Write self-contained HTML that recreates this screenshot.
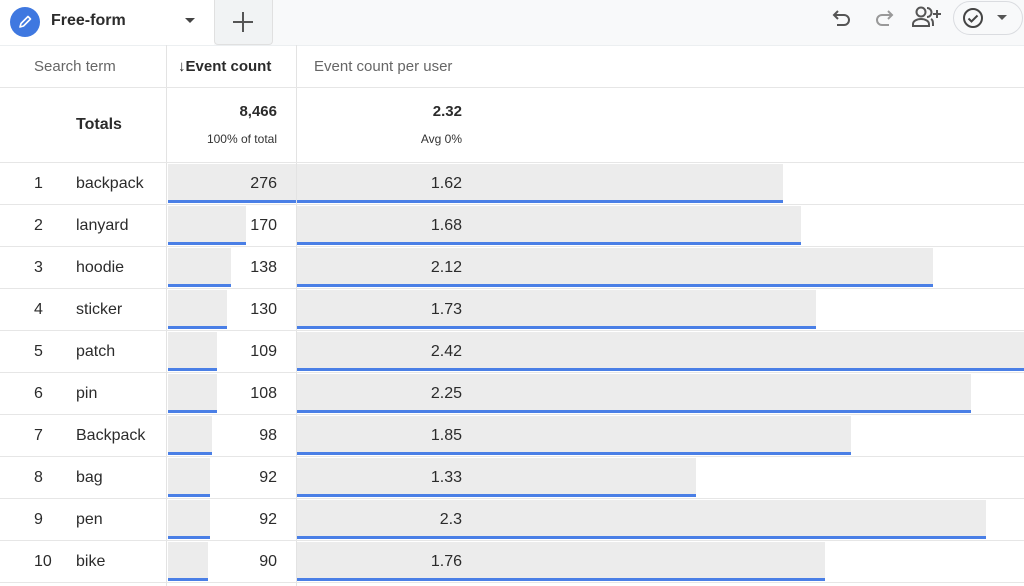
<!DOCTYPE html><html><head><style>
body{margin:0;width:1024px;height:586px;overflow:hidden;background:#fff;font-family:"Liberation Sans",Arial,sans-serif;color:#2b2b2b;position:relative}
.a{position:absolute}
.top{left:0;top:0;width:1024px;height:45px;background:#f8f9fa;border-bottom:1px solid #eceff1}
.tab{left:0;top:0;width:214px;height:45px;background:#fff}
.plus{left:214px;top:0;width:57px;height:44px;background:#f1f3f4;border:1px solid #e0e0e0;border-top:none;border-radius:0 0 4px 4px}
.hl{height:1px;background:#e6e6e6;left:0;width:1024px}
.vl{width:1px;background:#e3e3e3}
.g{background:#ececec}
.b{background:#4a7fe6;height:3px}
.t{font-size:16px;line-height:20px}
</style></head><body>
<div class="a top"></div>
<div class="a tab"></div>
<div class="a" style="left:10px;top:7px;width:30px;height:30px;border-radius:50%;background:#3f78e0"></div>
<svg class="a" style="left:17px;top:14px" width="16" height="16" viewBox="0 0 16 16"><path d="M3 13l1-3.5 7-7 2.5 2.5-7 7z" fill="none" stroke="#fff" stroke-width="1.6" stroke-linejoin="round"/></svg>
<div class="a t" style="left:51px;top:11px;font-weight:bold;font-size:16px">Free-form</div>
<div class="a" style="left:185px;top:18px;width:0;height:0;border-left:5px solid transparent;border-right:5px solid transparent;border-top:5px solid #444"></div>
<div class="a plus"></div>
<div class="a" style="left:233px;top:21px;width:20px;height:2px;background:#555"></div>
<div class="a" style="left:242px;top:12px;width:2px;height:20px;background:#555"></div>
<svg class="a" style="left:830px;top:5px" width="26" height="24" viewBox="0 0 26 24"><path d="M8 6l-4 4 4 4M4 10h10a5 5 0 0 1 0 10H7" fill="none" stroke="#555" stroke-width="2"/></svg>
<svg class="a" style="left:870px;top:5px" width="26" height="24" viewBox="0 0 26 24"><path d="M18 6l4 4-4 4M22 10H12a5 5 0 0 0 0 10h7" fill="none" stroke="#999" stroke-width="2"/></svg>
<svg class="a" style="left:910px;top:4px" width="34" height="26" viewBox="0 0 34 26"><circle cx="11" cy="8" r="4.5" fill="none" stroke="#555" stroke-width="2"/><path d="M3 22v-2c0-3 4-5 8-5s8 2 8 5v2z" fill="none" stroke="#555" stroke-width="2"/><path d="M17 4a4.5 4.5 0 0 1 0 9M21 15c2 1 2 3 2 7" fill="none" stroke="#555" stroke-width="2"/><path d="M27 6v8M23 10h8" stroke="#555" stroke-width="2"/></svg>
<div class="a" style="left:953px;top:1px;width:68px;height:32px;border:1px solid #dadce0;border-radius:17px;background:#f8f9fa"></div>
<svg class="a" style="left:961px;top:6px" width="24" height="24" viewBox="0 0 24 24"><circle cx="12" cy="12" r="9" fill="none" stroke="#444" stroke-width="2"/><path d="M7.5 12.5l3 3 6-6" fill="none" stroke="#444" stroke-width="2"/></svg>
<div class="a" style="left:997px;top:15px;width:0;height:0;border-left:5px solid transparent;border-right:5px solid transparent;border-top:5px solid #555"></div>

<div class="a vl" style="left:166px;top:45px;height:541px"></div>
<div class="a vl" style="left:296px;top:45px;height:541px"></div>
<div class="a t" style="left:34px;top:57px;color:#666;font-size:15px">Search term</div>
<div class="a t" style="left:178px;top:57px;font-weight:bold;font-size:15px">↓Event count</div>
<div class="a t" style="left:314px;top:57px;color:#666;font-size:15px">Event count per user</div>
<div class="a hl" style="top:87px"></div>
<div class="a t" style="left:76px;top:115px;font-weight:bold">Totals</div>
<div class="a t" style="right:747px;top:102px;font-weight:bold;font-size:15px">8,466</div>
<div class="a" style="right:747px;top:132px;font-size:12px;color:#333">100% of total</div>
<div class="a t" style="right:562px;top:102px;font-weight:bold;font-size:15px">2.32</div>
<div class="a" style="right:562px;top:132px;font-size:12px;color:#333">Avg 0%</div>
<div class="a hl" style="top:162px"></div>

<div class="a" style="left:0;top:163px;width:1024px">
<div style="position:relative;height:42px"><div class="a g" style="left:168px;top:1px;width:128px;height:38px"></div><div class="a b" style="left:168px;top:37px;width:128px"></div><div class="a g" style="left:297px;top:1px;width:486px;height:38px"></div><div class="a b" style="left:297px;top:37px;width:486px"></div><div class="a t" style="left:34px;top:11px">1</div><div class="a t" style="left:76px;top:11px">backpack</div><div class="a t" style="right:747px;top:11px">276</div><div class="a t" style="right:562px;top:11px">1.62</div><div class="a hl" style="top:41px"></div></div>
<div style="position:relative;height:42px"><div class="a g" style="left:168px;top:1px;width:78px;height:38px"></div><div class="a b" style="left:168px;top:37px;width:78px"></div><div class="a g" style="left:297px;top:1px;width:504px;height:38px"></div><div class="a b" style="left:297px;top:37px;width:504px"></div><div class="a t" style="left:34px;top:11px">2</div><div class="a t" style="left:76px;top:11px">lanyard</div><div class="a t" style="right:747px;top:11px">170</div><div class="a t" style="right:562px;top:11px">1.68</div><div class="a hl" style="top:41px"></div></div>
<div style="position:relative;height:42px"><div class="a g" style="left:168px;top:1px;width:63px;height:38px"></div><div class="a b" style="left:168px;top:37px;width:63px"></div><div class="a g" style="left:297px;top:1px;width:636px;height:38px"></div><div class="a b" style="left:297px;top:37px;width:636px"></div><div class="a t" style="left:34px;top:11px">3</div><div class="a t" style="left:76px;top:11px">hoodie</div><div class="a t" style="right:747px;top:11px">138</div><div class="a t" style="right:562px;top:11px">2.12</div><div class="a hl" style="top:41px"></div></div>
<div style="position:relative;height:42px"><div class="a g" style="left:168px;top:1px;width:59px;height:38px"></div><div class="a b" style="left:168px;top:37px;width:59px"></div><div class="a g" style="left:297px;top:1px;width:519px;height:38px"></div><div class="a b" style="left:297px;top:37px;width:519px"></div><div class="a t" style="left:34px;top:11px">4</div><div class="a t" style="left:76px;top:11px">sticker</div><div class="a t" style="right:747px;top:11px">130</div><div class="a t" style="right:562px;top:11px">1.73</div><div class="a hl" style="top:41px"></div></div>
<div style="position:relative;height:42px"><div class="a g" style="left:168px;top:1px;width:49px;height:38px"></div><div class="a b" style="left:168px;top:37px;width:49px"></div><div class="a g" style="left:297px;top:1px;width:727px;height:38px"></div><div class="a b" style="left:297px;top:37px;width:727px"></div><div class="a t" style="left:34px;top:11px">5</div><div class="a t" style="left:76px;top:11px">patch</div><div class="a t" style="right:747px;top:11px">109</div><div class="a t" style="right:562px;top:11px">2.42</div><div class="a hl" style="top:41px"></div></div>
<div style="position:relative;height:42px"><div class="a g" style="left:168px;top:1px;width:49px;height:38px"></div><div class="a b" style="left:168px;top:37px;width:49px"></div><div class="a g" style="left:297px;top:1px;width:674px;height:38px"></div><div class="a b" style="left:297px;top:37px;width:674px"></div><div class="a t" style="left:34px;top:11px">6</div><div class="a t" style="left:76px;top:11px">pin</div><div class="a t" style="right:747px;top:11px">108</div><div class="a t" style="right:562px;top:11px">2.25</div><div class="a hl" style="top:41px"></div></div>
<div style="position:relative;height:42px"><div class="a g" style="left:168px;top:1px;width:44px;height:38px"></div><div class="a b" style="left:168px;top:37px;width:44px"></div><div class="a g" style="left:297px;top:1px;width:554px;height:38px"></div><div class="a b" style="left:297px;top:37px;width:554px"></div><div class="a t" style="left:34px;top:11px">7</div><div class="a t" style="left:76px;top:11px">Backpack</div><div class="a t" style="right:747px;top:11px">98</div><div class="a t" style="right:562px;top:11px">1.85</div><div class="a hl" style="top:41px"></div></div>
<div style="position:relative;height:42px"><div class="a g" style="left:168px;top:1px;width:42px;height:38px"></div><div class="a b" style="left:168px;top:37px;width:42px"></div><div class="a g" style="left:297px;top:1px;width:399px;height:38px"></div><div class="a b" style="left:297px;top:37px;width:399px"></div><div class="a t" style="left:34px;top:11px">8</div><div class="a t" style="left:76px;top:11px">bag</div><div class="a t" style="right:747px;top:11px">92</div><div class="a t" style="right:562px;top:11px">1.33</div><div class="a hl" style="top:41px"></div></div>
<div style="position:relative;height:42px"><div class="a g" style="left:168px;top:1px;width:42px;height:38px"></div><div class="a b" style="left:168px;top:37px;width:42px"></div><div class="a g" style="left:297px;top:1px;width:689px;height:38px"></div><div class="a b" style="left:297px;top:37px;width:689px"></div><div class="a t" style="left:34px;top:11px">9</div><div class="a t" style="left:76px;top:11px">pen</div><div class="a t" style="right:747px;top:11px">92</div><div class="a t" style="right:562px;top:11px">2.3</div><div class="a hl" style="top:41px"></div></div>
<div style="position:relative;height:42px"><div class="a g" style="left:168px;top:1px;width:40px;height:38px"></div><div class="a b" style="left:168px;top:37px;width:40px"></div><div class="a g" style="left:297px;top:1px;width:528px;height:38px"></div><div class="a b" style="left:297px;top:37px;width:528px"></div><div class="a t" style="left:34px;top:11px">10</div><div class="a t" style="left:76px;top:11px">bike</div><div class="a t" style="right:747px;top:11px">90</div><div class="a t" style="right:562px;top:11px">1.76</div><div class="a hl" style="top:41px"></div></div>
</div>
</body></html>
